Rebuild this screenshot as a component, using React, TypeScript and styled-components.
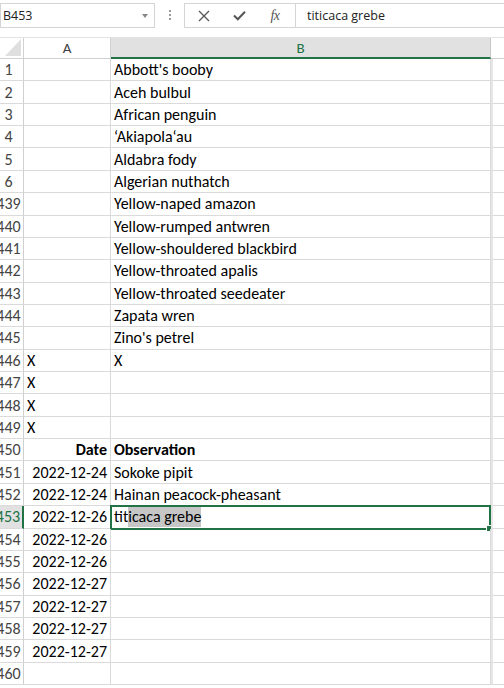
import React from "react";
import styled, { createGlobalStyle, css } from "styled-components";

const GREEN = "#217346";
const GRID = "#dadada";
const CELL_FONT = `Carlito, Lato, "Liberation Sans", sans-serif`;
const UI_FONT = `"Open Sans", "Noto Sans", sans-serif`;

const Global = createGlobalStyle`
  html, body { margin: 0; padding: 0; background: #fff; }
  body { width: 504px; height: 688px; overflow: hidden; font-family: ${CELL_FONT}; }
`;

const Page = styled.div`
  width: 504px;
  height: 688px;
  display: flex;
  flex-direction: column;
  overflow: hidden;
`;

const Toolbar = styled.div`
  display: flex;
  align-items: flex-start;
  height: 37px;
  padding-top: 3px;
  box-sizing: border-box;
`;

const NameBox = styled.div`
  box-sizing: border-box;
  width: 155px;
  height: 25px;
  border: 1px solid #d4d4d4;
  display: flex;
  align-items: center;
  justify-content: space-between;
  padding: 0 6px 0 2px;
  font-family: ${UI_FONT};
  font-size: 12.5px;
  color: #222;
`;

const DropArrow = styled.span`
  width: 0;
  height: 0;
  border-left: 3px solid transparent;
  border-right: 3px solid transparent;
  border-top: 4px solid #888;
  margin-top: 1px;
`;

const Grip = styled.div`
  width: 29px;
  height: 25px;
  display: flex;
  align-items: center;
  justify-content: center;
`;

const Dots = styled.span`
  width: 2px;
  height: 12px;
  background: repeating-linear-gradient(to bottom, #9a9a9a 0 2px, transparent 2px 4px);
`;

const ButtonGroup = styled.div`
  box-sizing: border-box;
  width: 111px;
  height: 25px;
  border: 1px solid #d4d4d4;
  border-right: none;
  display: flex;
  align-items: center;
`;

const IconButton = styled.span<{ $w: number }>`
  width: ${(p) => p.$w}px;
  height: 23px;
  display: flex;
  align-items: center;
  justify-content: center;
  color: #555;
`;

const Fx = styled.span`
  font-family: "Liberation Serif", "DejaVu Serif", serif;
  font-style: italic;
  font-size: 14px;
  color: #555;
  letter-spacing: -0.5px;
`;

const FormulaBox = styled.div`
  flex: 1;
  box-sizing: border-box;
  height: 25px;
  border: 1px solid #d4d4d4;
  border-right: none;
  display: flex;
  align-items: center;
  padding-left: 11px;
  font-family: ${UI_FONT};
  font-size: 12.5px;
  color: #222;
`;

const Sheet = styled.div`
  flex: 1;
  overflow: hidden;
`;

const SheetInner = styled.div`
  margin-left: -6px;
  width: 510px;
`;

const COLS = "30px 87px 380px 1fr";

const HeaderRow = styled.div`
  display: grid;
  grid-template-columns: ${COLS};
  height: 22px;
  border-top: 1px solid #e3e3e3;
  box-sizing: border-box;
`;

const Corner = styled.div`
  position: relative;
  border-right: 1px solid #d0d0d0;
  border-bottom: 1px solid #d0d0d0;
`;

const Triangle = styled.span`
  position: absolute;
  right: 2px;
  bottom: 2px;
  width: 0;
  height: 0;
  border-left: 16px solid transparent;
  border-bottom: 17px solid #dfdfdf;
`;

const ColHead = styled.div<{ $sel?: boolean; $last?: boolean }>`
  display: flex;
  align-items: center;
  justify-content: center;
  font-family: ${CELL_FONT};
  font-size: 15px;
  color: #444;
  box-sizing: border-box;
  border-right: 1px solid #d0d0d0;
  border-bottom: 1px solid #d0d0d0;
  ${(p) =>
    p.$sel &&
    css`
      background: #e1e1e1;
      color: ${GREEN};
      border-bottom: 2px solid ${GREEN};
      border-right: 1px solid #c6c6c6;
    `}
  ${(p) =>
    p.$last &&
    css`
      border-right: none;
    `}
`;

const Row = styled.div`
  display: grid;
  grid-template-columns: ${COLS};
  height: 22.36px;
`;

const RowHead = styled.div<{ $sel?: boolean }>`
  display: flex;
  align-items: center;
  justify-content: center;
  box-sizing: border-box;
  font-family: ${CELL_FONT};
  font-size: 16px;
  color: #444;
  border-right: 1px solid #d0d0d0;
  border-bottom: 1px solid ${GRID};
  overflow: hidden;
  white-space: nowrap;
  ${(p) =>
    p.$sel &&
    css`
      background: #e1e1e1;
      color: ${GREEN};
      border-right: 2px solid ${GREEN};
    `}
`;

const Cell = styled.div<{ $align?: "left" | "right"; $bold?: boolean; $edge?: boolean }>`
  position: relative;
  display: flex;
  align-items: center;
  justify-content: ${(p) => (p.$align === "right" ? "flex-end" : "flex-start")};
  box-sizing: border-box;
  padding: 0 3px;
  font-family: ${CELL_FONT};
  font-size: 16px;
  font-weight: ${(p) => (p.$bold ? 700 : 400)};
  color: #000;
  white-space: nowrap;
  border-right: 1px solid ${GRID};
  border-bottom: 1px solid ${GRID};
  ${(p) =>
    p.$edge &&
    css`
      border-left: 2px solid #e6e6e6;
      border-right: none;
    `}
`;

const Selection = styled.span`
  position: absolute;
  left: -1px;
  top: -1px;
  right: -1px;
  bottom: -2px;
  border: 2px solid ${GREEN};
  pointer-events: none;
`;

const FillHandle = styled.span`
  position: absolute;
  right: -4px;
  bottom: -4px;
  width: 5px;
  height: 5px;
  background: ${GREEN};
  border: 1px solid #fff;
`;

const Highlight = styled.span`
  background: #c6c6c6;
  line-height: 20px;
  display: inline-block;
`;

type RowData = {
  n: string;
  a?: string;
  b?: React.ReactNode;
  bold?: boolean;
  aRight?: boolean;
  sel?: boolean;
};

const rows: RowData[] = [
  { n: "1", b: "Abbott's booby" },
  { n: "2", b: "Aceh bulbul" },
  { n: "3", b: "African penguin" },
  { n: "4", b: "\u2018Akiapola\u2018au" },
  { n: "5", b: "Aldabra fody" },
  { n: "6", b: "Algerian nuthatch" },
  { n: "439", b: "Yellow-naped amazon" },
  { n: "440", b: "Yellow-rumped antwren" },
  { n: "441", b: "Yellow-shouldered blackbird" },
  { n: "442", b: "Yellow-throated apalis" },
  { n: "443", b: "Yellow-throated seedeater" },
  { n: "444", b: "Zapata wren" },
  { n: "445", b: "Zino's petrel" },
  { n: "446", a: "X", b: "X" },
  { n: "447", a: "X" },
  { n: "448", a: "X" },
  { n: "449", a: "X" },
  { n: "450", a: "Date", b: "Observation", bold: true, aRight: true },
  { n: "451", a: "2022-12-24", b: "Sokoke pipit", aRight: true },
  { n: "452", a: "2022-12-24", b: "Hainan peacock-pheasant", aRight: true },
  {
    n: "453",
    a: "2022-12-26",
    aRight: true,
    sel: true,
    b: (
      <>
        tit<Highlight>icaca grebe</Highlight>
      </>
    ),
  },
  { n: "454", a: "2022-12-26", aRight: true },
  { n: "455", a: "2022-12-26", aRight: true },
  { n: "456", a: "2022-12-27", aRight: true },
  { n: "457", a: "2022-12-27", aRight: true },
  { n: "458", a: "2022-12-27", aRight: true },
  { n: "459", a: "2022-12-27", aRight: true },
  { n: "460" },
];

const CrossIcon = () => (
  <svg width="12" height="12" viewBox="0 0 12 12">
    <path d="M1 1 L11 11 M11 1 L1 11" stroke="#555" strokeWidth="1.3" fill="none" />
  </svg>
);

const CheckIcon = () => (
  <svg width="13" height="11" viewBox="0 0 13 11">
    <path d="M1 5.5 L4.8 9.3 L12 1.8" stroke="#555" strokeWidth="2" fill="none" />
  </svg>
);

export default function App() {
  return (
    <Page>
      <Global />
      <Toolbar>
        <NameBox>
          <span>B453</span>
          <DropArrow />
        </NameBox>
        <Grip>
          <Dots />
        </Grip>
        <ButtonGroup>
          <IconButton $w={38}>
            <CrossIcon />
          </IconButton>
          <IconButton $w={32}>
            <CheckIcon />
          </IconButton>
          <IconButton $w={40}>
            <Fx>fx</Fx>
          </IconButton>
        </ButtonGroup>
        <FormulaBox>titicaca grebe</FormulaBox>
      </Toolbar>
      <Sheet>
        <SheetInner>
          <HeaderRow>
            <Corner>
              <Triangle />
            </Corner>
            <ColHead>A</ColHead>
            <ColHead $sel>B</ColHead>
            <ColHead $last />
          </HeaderRow>
          {rows.map((r) => (
            <Row key={r.n}>
              <RowHead $sel={r.sel}>{r.n}</RowHead>
              <Cell $align={r.aRight ? "right" : "left"} $bold={r.bold}>
                {r.a}
              </Cell>
              <Cell $bold={r.bold}>
                {r.b}
                {r.sel && (
                  <Selection>
                    <FillHandle />
                  </Selection>
                )}
              </Cell>
              <Cell $edge />
            </Row>
          ))}
        </SheetInner>
      </Sheet>
    </Page>
  );
}
